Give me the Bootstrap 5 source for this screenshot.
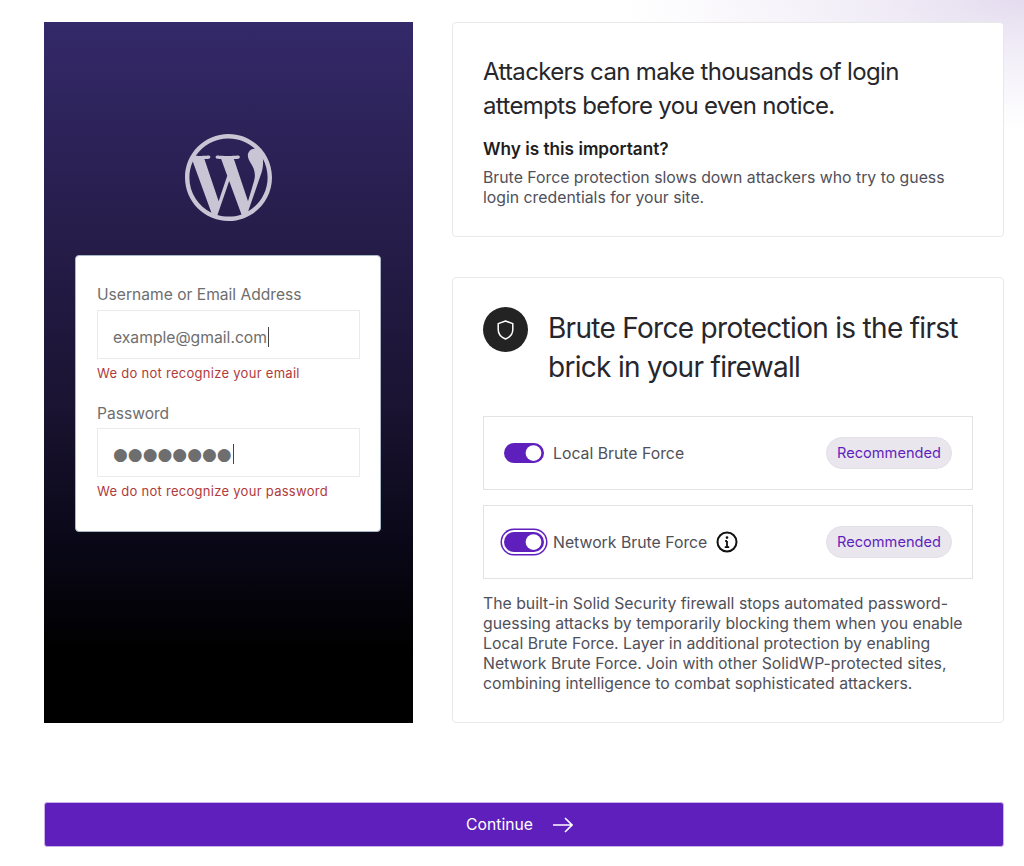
<!DOCTYPE html>
<html lang="en">

<head>
    <meta charset="UTF-8">
    <meta name="viewport" content="width=device-width, initial-scale=1.0">
    <title>Brute Force protection</title>
    <link href="https://cdn.jsdelivr.net/npm/bootstrap@5.3.0/dist/css/bootstrap.min.css" rel="stylesheet">
    <style>
        body {
            font-family: Inter, "Liberation Sans", sans-serif;
            min-height: 866px;
            background: radial-gradient(ellipse 400px 130px at 100% 0, #e4dcef 0%, #f3eff8 45%, #ffffff 100%) no-repeat #fff;
            color: #50505a;
        }

        .page-wrap {
            padding: 22px 20px 0 44px;
        }

        .login-panel {
            width: 369px;
            flex-shrink: 0;
            margin-right: 39px;
            padding: 112px 32px 0 31px;
            background: linear-gradient(180deg, #342969 0%, #1a1331 55%, #0a0818 74%, #000 90%);
        }

        .wp-logo {
            width: 87px;
            height: 87px;
            fill: #c9c5d4;
        }

        .login-box {
            margin-top: 34px;
            height: 277px;
            padding: 29px 20px 0 21px;
            background: #fff;
            border: 1px solid #a9b6c6;
            border-radius: 4px;
            font-size: 15.6px;
            color: #6e6e6e;
        }

        .field-label {
            line-height: 20px;
            margin-bottom: 5px;
        }

        .pass-label {
            margin-bottom: 4px;
        }

        .field-box {
            height: 49px;
            padding: 0 15px;
            border: 1.5px solid #ebebeb;
            border-radius: 0;
            color: #6e6e6e;
            line-height: 54px;
            font-size: 15.7px;
        }

        .caret-mark {
            display: inline-block;
            width: 1px;
            height: 20px;
            margin-left: 1px;
            background: #444;
            vertical-align: -4px;
        }

        .pass-dots {
            font-family: "DejaVu Sans", sans-serif;
            font-size: 17px;
            line-height: 50px;
        }

        .field-error {
            margin-top: 6px;
            margin-bottom: 0;
            height: 39px;
            font-size: 13px;
            line-height: 16px;
            letter-spacing: .28px;
            color: #b03a3a;
        }

        .info-box {
            background: #fff;
            border: 1.5px solid #e9e9e9;
            border-radius: 4px;
            padding: 30px;
        }

        .intro-box {
            height: 215px;
        }

        .fw-box {
            height: 446px;
            margin-top: 40px;
            padding-top: 29px;
        }

        .intro-title {
            margin: 2px 0 15px;
            font-size: 24px;
            line-height: 34px;
            letter-spacing: -.65px;
            font-weight: 400;
            color: #26262c;
        }

        .intro-sub {
            margin: 0 0 8px;
            font-size: 17.2px;
            line-height: 22px;
            font-weight: 600;
            color: #1e1e1e;
        }

        .body-copy {
            margin: 0;
            font-size: 15.8px;
            line-height: 20px;
            color: #50505a;
        }

        .shield-dot {
            width: 45px;
            height: 45px;
            border-radius: 50%;
            background: #232323;
            flex-shrink: 0;
        }

        .fw-title {
            margin: 2px 0 0 20px;
            font-size: 28px;
            line-height: 39px;
            letter-spacing: -.7px;
            font-weight: 400;
            color: #26262c;
        }

        .toggle-row {
            height: 74px;
            margin-top: 15px;
            padding: 0 20px;
            border: 1.5px solid #e3e3e3;
            font-size: 15.8px;
        }

        .first-row {
            margin-top: 29px;
        }

        .toggle-row .form-check-input {
            width: 40px;
            height: 20px;
            margin: 0 9px 0 0;
            float: none;
            background-color: #5f1fbc;
            background-size: 21px;
            border: 0;
        }

        .toggle-row .form-check-label {
            padding-top: 2px;
        }

        .ring-on {
            box-shadow: 0 0 0 2px #fff, 0 0 0 3.5px #5f1fbc;
        }

        .info-icon {
            width: 22px;
            height: 22px;
            margin-left: 9px;
        }

        .rec-pill {
            height: 32px;
            width: 126px;
            padding-top: 2px;
            border-radius: 16px;
            background: #e9e6ee;
            border: 1px solid #e3e0e8;
            color: #5f1fbc;
            font-size: 14.6px;
        }

        .row-note {
            margin-top: 15px;
        }

        .continue-btn {
            width: 960px;
            height: 45px;
            margin-top: 79px;
            padding: 0 9px 0 0;
            gap: 20px;
            background: #5f1fbc;
            border: 1px solid #c9b4ea;
            border-radius: 3px;
            color: #fff;
            font-size: 15.7px;
        }

        .continue-btn:hover {
            background: #5f1fbc;
            color: #fff;
        }
    </style>
</head>

<body>
    <div class="page-wrap">
        <div class="d-flex">
            <!-- Login preview -->
            <div class="login-panel">
                <svg class="wp-logo d-block mx-auto" viewBox="0 0 24 24" role="img" aria-label="WordPress">
                    <path d="M21.469 6.825c.84 1.537 1.318 3.3 1.318 5.175 0 3.979-2.156 7.456-5.363 9.325l3.295-9.527c.615-1.54.82-2.771.82-3.864 0-.405-.026-.78-.07-1.11m-7.981.105c.647-.03 1.232-.105 1.232-.105.582-.075.514-.93-.067-.899 0 0-1.755.135-2.88.135-1.064 0-2.85-.15-2.85-.15-.585-.03-.661.855-.075.885 0 0 .54.061 1.125.09l1.68 4.605-2.37 7.08L5.354 6.9c.649-.03 1.234-.1 1.234-.1.585-.075.516-.93-.065-.896 0 0-1.746.138-2.874.138-.2 0-.438-.008-.69-.015C4.911 3.15 8.235 1.215 12 1.215c2.809 0 5.365 1.072 7.286 2.833-.046-.003-.091-.009-.141-.009-1.06 0-1.812.923-1.812 1.914 0 .89.513 1.643 1.06 2.531.411.72.89 1.643.89 2.977 0 .915-.354 1.994-.821 3.479l-1.075 3.585-3.9-11.61.001.014zM12 22.784c-1.059 0-2.081-.153-3.048-.437l3.237-9.406 3.315 9.087c.024.053.05.101.078.149-1.12.393-2.325.609-3.582.609M1.211 12c0-1.564.336-3.05.935-4.39L7.29 21.709C3.694 19.96 1.212 16.271 1.211 12M12 0C5.385 0 0 5.385 0 12s5.385 12 12 12 12-5.385 12-12S18.615 0 12 0"/>
                </svg>
                <div class="login-box">
                    <div class="field-label">Username or Email Address</div>
                    <div class="field-box">example@gmail.com<span class="caret-mark"></span></div>
                    <p class="field-error">We do not recognize your email</p>
                    <div class="field-label pass-label">Password</div>
                    <div class="field-box pass-dots">●●●●●●●●<span class="caret-mark"></span></div>
                    <p class="field-error">We do not recognize your password</p>
                </div>
            </div>

            <!-- Info column -->
            <div class="flex-grow-1">
                <div class="info-box intro-box">
                    <h2 class="intro-title">Attackers can make thousands of login attempts before you even notice.</h2>
                    <p class="intro-sub">Why is this important?</p>
                    <p class="body-copy">Brute Force protection slows down attackers who try to guess login credentials for your site.</p>
                </div>

                <div class="info-box fw-box">
                    <div class="d-flex align-items-start">
                        <div class="shield-dot d-flex align-items-center justify-content-center">
                            <svg width="17" height="20" viewBox="0 0 17 20" fill="none" stroke="#fff" stroke-width="1.5" stroke-linejoin="round">
                                <path d="M8.5 1 15.8 3.6V9.6C15.8 14 12.6 17.4 8.5 19 4.4 17.4 1.2 14 1.2 9.6V3.6Z"/>
                            </svg>
                        </div>
                        <h2 class="fw-title">Brute Force protection is the first brick in your firewall</h2>
                    </div>

                    <div class="toggle-row first-row d-flex align-items-center">
                        <div class="form-check form-switch d-flex align-items-center p-0 m-0">
                            <input class="form-check-input" type="checkbox" role="switch" id="localBf" checked>
                            <label class="form-check-label" for="localBf">Local Brute Force</label>
                        </div>
                        <span class="rec-pill ms-auto d-flex align-items-center justify-content-center">Recommended</span>
                    </div>

                    <div class="toggle-row d-flex align-items-center">
                        <div class="form-check form-switch d-flex align-items-center p-0 m-0">
                            <input class="form-check-input ring-on" type="checkbox" role="switch" id="networkBf" checked>
                            <label class="form-check-label" for="networkBf">Network Brute Force</label>
                        </div>
                        <svg class="info-icon" viewBox="0 0 22 22" fill="none" stroke="#111" stroke-width="2">
                            <circle cx="11" cy="11" r="9.5"/>
                            <path d="M11 10v6.5M8.8 16.2h4.4M9.2 10h1.8" stroke-width="1.8"/>
                            <circle cx="11" cy="6.6" r="1.3" fill="#111" stroke="none"/>
                        </svg>
                        <span class="rec-pill ms-auto d-flex align-items-center justify-content-center">Recommended</span>
                    </div>

                    <p class="body-copy row-note">The built-in Solid Security firewall stops automated password-guessing attacks by temporarily blocking them when you enable Local Brute Force. Layer in additional protection by enabling Network Brute Force. Join with other SolidWP-protected sites, combining intelligence to combat sophisticated attackers.</p>
                </div>
            </div>
        </div>

        <button type="button" class="btn continue-btn d-flex align-items-center justify-content-center">
            <span>Continue</span>
            <svg width="20" height="16" viewBox="0 0 20 16" fill="none" stroke="#fff" stroke-width="1.6">
                <path d="M0 8H19M12 1l7 7-7 7"/>
            </svg>
        </button>
    </div>

    <script src="https://cdn.jsdelivr.net/npm/bootstrap@5.3.0/dist/js/bootstrap.bundle.min.js"></script>
</body>

</html>
